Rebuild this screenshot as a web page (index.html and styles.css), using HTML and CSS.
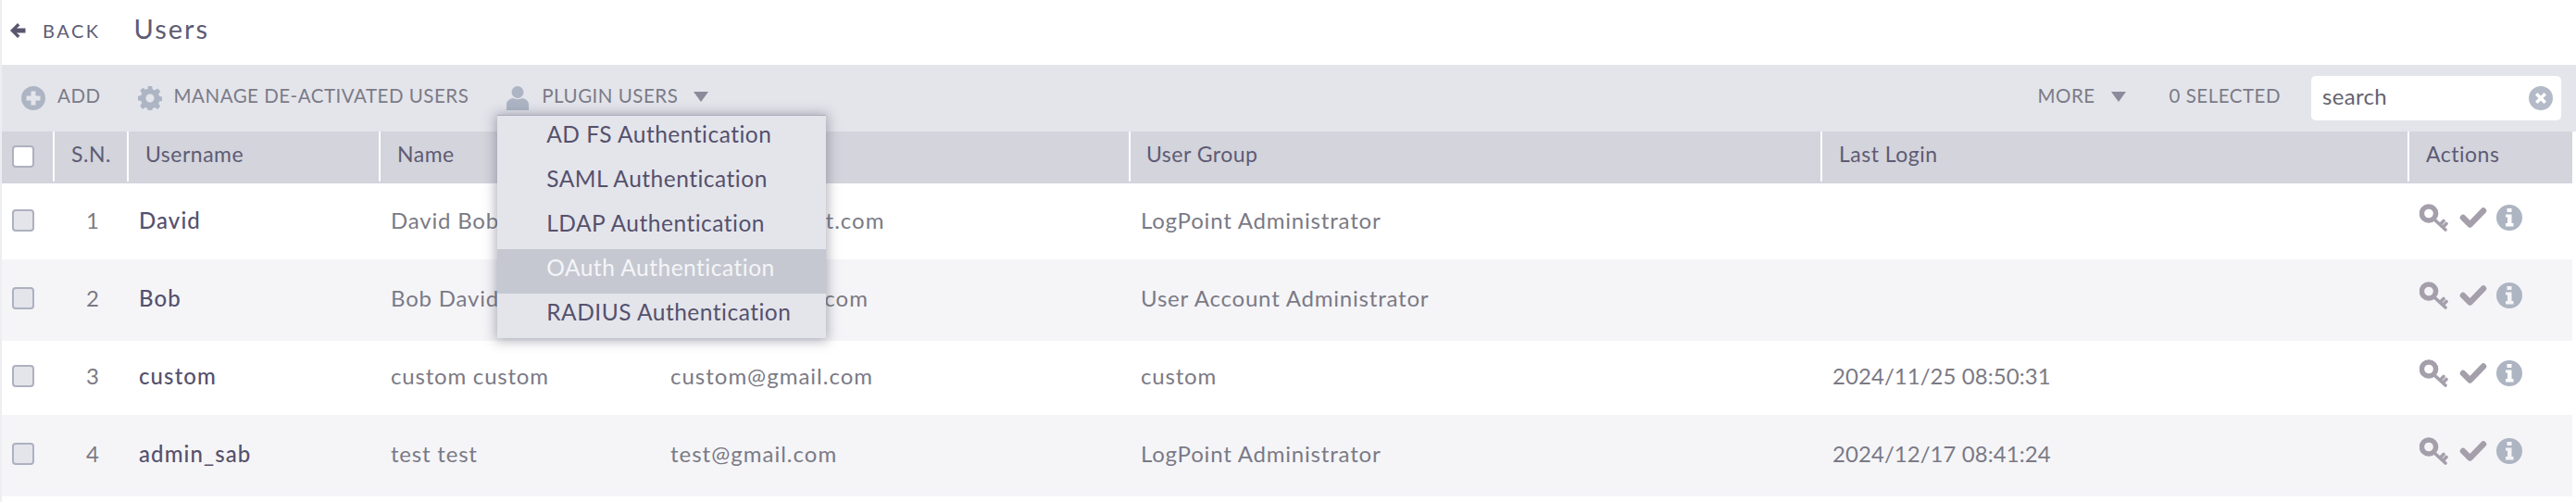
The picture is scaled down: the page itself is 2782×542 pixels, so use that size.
FILE: index.html
```html
<!DOCTYPE html>
<html lang="en">
<head>
<meta charset="utf-8">
<title>Users</title>
<link rel="stylesheet" href="styles.css">
</head>
<body>
<svg class="defs" width="0" height="0" aria-hidden="true">
  <symbol id="i-key" viewBox="0 0 32 30">
    <circle cx="10" cy="10.5" r="7.6" fill="none" stroke="currentColor" stroke-width="5.5"/>
    <path d="M15 16 L28 28 M22 22.5 L26 18.5 M25.5 25 L29 21.5" fill="none" stroke="currentColor" stroke-width="3.6" stroke-linecap="round"/>
  </symbol>
  <symbol id="i-check" viewBox="0 0 30 24">
    <path d="M4 12 L11.500 19.500 L26 4.500" fill="none" stroke="currentColor" stroke-width="6.500" stroke-linecap="round" stroke-linejoin="round"/>
  </symbol>
  <symbol id="i-info" viewBox="0 0 28 28">
    <path fill-rule="evenodd" fill="currentColor" d="M14 0a14 14 0 1 1 0 28a14 14 0 1 1 0-28zM11.500 4v4h5V4zM10 10.500v3h2v6.500h-2v3.500h8.500V20h-2v-9.500z"/>
  </symbol>
</svg>

<main class="page">
  <header class="titlebar">
    <a class="back">
      <svg class="back-icon" viewBox="0 0 18 16"><path d="M9 0 L1 8 L9 16 L11.500 13.500 L8 10.500 H17.500 V5.500 H8 L11.500 2.500 Z"/></svg>
      <span>BACK</span>
    </a>
    <h1 class="title">Users</h1>
  </header>

  <section class="toolbar">
    <div class="tool-group">
      <a class="tool tool-add">
        <svg class="tool-icon" viewBox="0 0 26 26"><path fill-rule="evenodd" d="M13 0a13 13 0 1 1 0 26a13 13 0 1 1 0-26zM10.500 5.500v5h-5v5h5v5h5v-5h5v-5h-5v-5z"/></svg>
        <span class="tool-label">ADD</span>
      </a>
      <a class="tool tool-manage">
        <svg class="tool-icon" viewBox="0 0 26 26"><path fill-rule="evenodd" d="M10.800 0h4.400l.6 3.500 2.400 1 2.900-2 3.100 3.100-2 2.900 1 2.400 3.500.6v4.400l-3.500.6-1 2.400 2 2.900-3.100 3.100-2.900-2-2.400 1-.6 3.500h-4.400l-.6-3.500-2.400-1-2.900 2L2.300 21.200l2-2.900-1-2.400L-.2 15.300v-4.600l3.500-.6 1-2.400-2-2.900 3.100-3.100 2.900 2 2.400-1zM13 8.500a4.500 4.500 0 1 0 0 9a4.500 4.500 0 1 0 0-9z"/></svg>
        <span class="tool-label">MANAGE DE-ACTIVATED USERS</span>
      </a>
      <div class="tool tool-plugin">
        <svg class="tool-icon person" viewBox="0 0 24 26"><circle cx="12" cy="6.500" r="6.500"/><path d="M0 26V20c0-4 3-6.500 7-7 2.800 1.500 7.200 1.500 10 0 4 .5 7 3 7 7v6z"/></svg>
        <span class="tool-label">PLUGIN USERS</span>
        <i class="caret"></i>
        <ul class="menu">
          <li class="menu-item">AD FS Authentication</li>
          <li class="menu-item">SAML Authentication</li>
          <li class="menu-item">LDAP Authentication</li>
          <li class="menu-item active">OAuth Authentication</li>
          <li class="menu-item">RADIUS Authentication</li>
        </ul>
      </div>
    </div>
    <div class="tool-group">
      <a class="tool tool-more"><span class="tool-label">MORE</span><i class="caret"></i></a>
      <span class="tool tool-selected"><span class="tool-label">0 SELECTED</span></span>
      <div class="search">
        <span class="search-text">search</span>
        <svg class="search-clear" viewBox="0 0 26 26"><path fill-rule="evenodd" d="M13 0a13 13 0 1 1 0 26a13 13 0 1 1 0-26zM9.500 7L7 9.500 10.500 13 7 16.500 9.500 19 13 15.500 16.500 19 19 16.500 15.500 13 19 9.500 16.500 7 13 10.500z"/></svg>
      </div>
    </div>
  </section>

  <section class="grid">
    <div class="head">
      <div class="hcell hcheck"><span class="box box-white"></span></div>
      <div class="hcell">S.N.</div>
      <div class="hcell">Username</div>
      <div class="hcell">Name</div>
      <div class="hcell">Email</div>
      <div class="hcell hgroup">User Group</div>
      <div class="hcell">Last Login</div>
      <div class="hcell">Actions</div>
    </div>

    <div class="row row-a">
      <div class="cell ccheck"><span class="box"></span></div>
      <div class="cell cnum">1</div>
      <div class="cell cuser">David</div>
      <div class="cell">David Bob</div>
      <div class="cell cemail">david.bob@test.com</div>
      <div class="cell">LogPoint Administrator</div>
      <div class="cell"></div>
      <div class="cell cact"><svg class="a-key"><use href="#i-key"/></svg><svg class="a-check"><use href="#i-check"/></svg><svg class="a-info"><use href="#i-info"/></svg></div>
    </div>
    <div class="row row-b">
      <div class="cell ccheck"><span class="box"></span></div>
      <div class="cell cnum">2</div>
      <div class="cell cuser">Bob</div>
      <div class="cell">Bob David</div>
      <div class="cell cemail">bob.dv@gmail.com</div>
      <div class="cell">User Account Administrator</div>
      <div class="cell"></div>
      <div class="cell cact"><svg class="a-key"><use href="#i-key"/></svg><svg class="a-check"><use href="#i-check"/></svg><svg class="a-info"><use href="#i-info"/></svg></div>
    </div>
    <div class="row row-a">
      <div class="cell ccheck"><span class="box"></span></div>
      <div class="cell cnum">3</div>
      <div class="cell cuser">custom</div>
      <div class="cell">custom custom</div>
      <div class="cell cemail">custom@gmail.com</div>
      <div class="cell">custom</div>
      <div class="cell cdate">2024/11/25 08:50:31</div>
      <div class="cell cact"><svg class="a-key"><use href="#i-key"/></svg><svg class="a-check"><use href="#i-check"/></svg><svg class="a-info"><use href="#i-info"/></svg></div>
    </div>
    <div class="row row-b">
      <div class="cell ccheck"><span class="box"></span></div>
      <div class="cell cnum">4</div>
      <div class="cell cuser">admin_sab</div>
      <div class="cell">test test</div>
      <div class="cell cemail">test@gmail.com</div>
      <div class="cell">LogPoint Administrator</div>
      <div class="cell cdate">2024/12/17 08:41:24</div>
      <div class="cell cact"><svg class="a-key"><use href="#i-key"/></svg><svg class="a-check"><use href="#i-check"/></svg><svg class="a-info"><use href="#i-info"/></svg></div>
    </div>
  </section>
</main>
</body>
</html>
```
FILE: styles.css
```css
* { box-sizing: border-box; }
html, body { margin: 0; padding: 0; height: 100%; background: #fff; overflow: hidden; }
body { font-family: Lato, "Open Sans", sans-serif; color: #55516c; }
.defs { position: absolute; }
.page { border-left: 2px solid #eceef2; min-height: 542px; }

.titlebar { height: 70px; display: flex; align-items: center; padding-bottom: 4px; }
.back { display: flex; align-items: center; margin-left: 8px; font-size: 20px; letter-spacing: 2.5px; color: #5e5b74; }
.back-icon { width: 18px; height: 16px; fill: #5a5670; margin-right: 18px; }
.title { margin: 0 0 5px 36px; font-size: 29px; font-weight: 400; letter-spacing: 2px; color: #5e5b74; }

.toolbar { height: 72px; background: #e4e5eb; display: flex; justify-content: space-between; align-items: center; padding-right: 16px; }
.tool-group { display: flex; align-items: center; }
.tool { display: flex; align-items: center; font-size: 20.500px; letter-spacing: .5px; color: #7b7b87; }
.tool-label { padding-bottom: 6px; }
.tool-icon { width: 26px; height: 26px; fill: #adb5c4; }
.tool-add { margin-left: 21px; }
.tool-add .tool-icon { margin-right: 13px; }
.tool-manage { margin-left: 40px; }
.tool-manage .tool-icon { margin-right: 13px; }
.tool-plugin { position: relative; margin-left: 41px; }
.tool-plugin .person { width: 24px; margin-right: 14px; }
.caret { width: 0; height: 0; border-left: 8.500px solid transparent; border-right: 8.500px solid transparent; border-top: 11px solid #8c8a9a; margin-left: 17px; margin-bottom: 4px; }

.menu { position: absolute; left: -10px; top: 33px; width: 355px; margin: 0; padding: 0; list-style: none; background: #e4e5eb; border-top: 1px solid #a9acba; box-shadow: 0 1px 12px 2px rgba(85, 85, 105, .45); z-index: 5; }
.menu-item { height: 48px; line-height: 40px; padding-left: 53px; font-size: 24.500px; letter-spacing: .5px; color: #55516c; white-space: nowrap; }
.menu-item.active { background: #c5c8d0; color: #f4f5f8; }

.tool-selected { margin-left: 47px; }
.search { width: 270px; height: 48px; margin-left: 33px; background: #fff; border-radius: 5px; display: flex; align-items: center; justify-content: space-between; padding: 0 9px 0 12px; }
.search-text { font-size: 24px; color: #66636f; letter-spacing: .3px; padding-bottom: 6px; }
.search-clear { width: 26px; height: 26px; fill: #b4bac8; }

.grid { width: 2776px; }
.head, .row { display: grid; grid-template-columns: 55px 80px 272px 302px 508px 747px 634px 1fr; }
.head { height: 56px; background: #d3d4dc; }
.hcell { display: flex; align-items: center; padding: 0 0 7px 18px; font-size: 23px; letter-spacing: .5px; color: #5e5b74; border-left: 2px solid #fff; height: 54px; }
.hcheck { border-left: 0; padding: 0 0 0 11px; }
.hgroup { padding-left: 17px; }
.row { font-size: 24px; letter-spacing: .8px; color: #7b7a85; align-items: center; }
.row-a { height: 80px; background: #fff; }
.row-b { height: 88px; background: #f5f5f8; }
.head + .row { margin-top: 2px; }
.cell { padding: 0 0 6px 13px; white-space: nowrap; }
.ccheck { padding: 0 0 4px 11px; display: flex; }
.cnum { padding-left: 36px; font-size: 24px; }
.cuser { color: #55516c; font-weight: 500; letter-spacing: 1.1px; }
.cemail { letter-spacing: 1px; }
.cdate { letter-spacing: .05px; }
.cact { display: flex; align-items: center; padding: 0 0 10px 13px; }
.box { display: block; width: 24px; height: 24px; border: 2px solid #adb1bf; border-radius: 4px; background: #e4e5eb; }
.box-white { background: #fff; }
.a-key { width: 32px; height: 30px; color: #a49fab; }
.a-check { width: 30px; height: 24px; margin-left: 11px; color: #a49fab; }
.a-info { width: 28px; height: 28px; margin-left: 10px; color: #aeb5c2; }
```
